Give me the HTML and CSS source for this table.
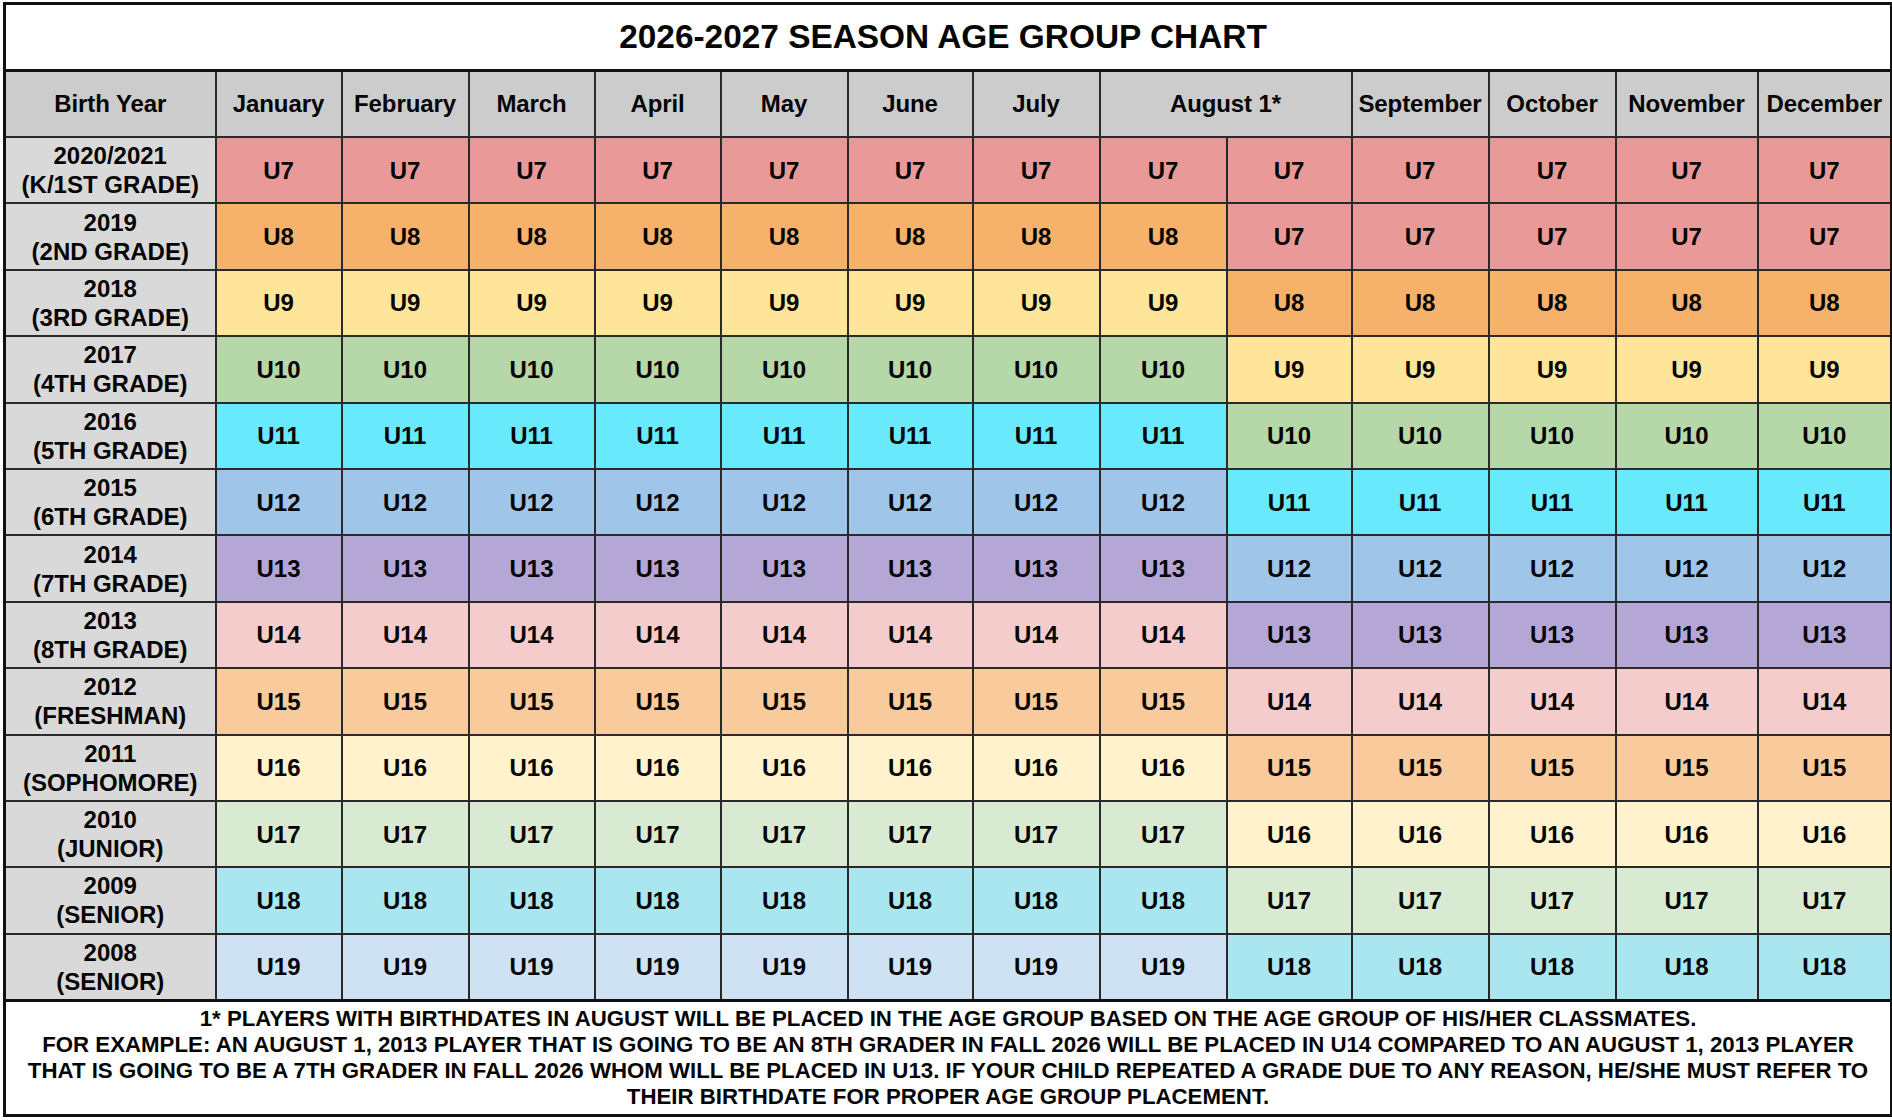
FILE: index.html
```html
<!DOCTYPE html>
<html lang="en">
<head>
<meta charset="utf-8">
<title>2026-2027 Season Age Group Chart</title>
<link rel="stylesheet" href="styles.css">
</head>
<body>
<table class="chart">
  <colgroup>
    <col class="c-year">
    <col class="c-m1"><col class="c-m2"><col class="c-m3"><col class="c-m4"><col class="c-m5"><col class="c-m6"><col class="c-m7">
    <col class="c-a1"><col class="c-a2">
    <col class="c-m9"><col class="c-m10"><col class="c-m11"><col class="c-m12">
  </colgroup>
  <tr class="title"><th colspan="14">2026-2027 SEASON AGE GROUP CHART</th></tr>
  <tr class="head">
    <th>Birth Year</th>
    <th>January</th>
    <th>February</th>
    <th>March</th>
    <th>April</th>
    <th>May</th>
    <th>June</th>
    <th>July</th>
    <th colspan="2">August 1*</th>
    <th>September</th>
    <th>October</th>
    <th>November</th>
    <th>December</th>
  </tr>
  <tr class="row">
    <td class="year">2020/2021<br>(K/1ST GRADE)</td>
    <td class="u7">U7</td><td class="u7">U7</td><td class="u7">U7</td><td class="u7">U7</td><td class="u7">U7</td><td class="u7">U7</td><td class="u7">U7</td><td class="u7">U7</td>
    <td class="u7">U7</td><td class="u7">U7</td><td class="u7">U7</td><td class="u7">U7</td><td class="u7">U7</td>
  </tr>
  <tr class="row">
    <td class="year">2019<br>(2ND GRADE)</td>
    <td class="u8">U8</td><td class="u8">U8</td><td class="u8">U8</td><td class="u8">U8</td><td class="u8">U8</td><td class="u8">U8</td><td class="u8">U8</td><td class="u8">U8</td>
    <td class="u7">U7</td><td class="u7">U7</td><td class="u7">U7</td><td class="u7">U7</td><td class="u7">U7</td>
  </tr>
  <tr class="row">
    <td class="year">2018<br>(3RD GRADE)</td>
    <td class="u9">U9</td><td class="u9">U9</td><td class="u9">U9</td><td class="u9">U9</td><td class="u9">U9</td><td class="u9">U9</td><td class="u9">U9</td><td class="u9">U9</td>
    <td class="u8">U8</td><td class="u8">U8</td><td class="u8">U8</td><td class="u8">U8</td><td class="u8">U8</td>
  </tr>
  <tr class="row">
    <td class="year">2017<br>(4TH GRADE)</td>
    <td class="u10">U10</td><td class="u10">U10</td><td class="u10">U10</td><td class="u10">U10</td><td class="u10">U10</td><td class="u10">U10</td><td class="u10">U10</td><td class="u10">U10</td>
    <td class="u9">U9</td><td class="u9">U9</td><td class="u9">U9</td><td class="u9">U9</td><td class="u9">U9</td>
  </tr>
  <tr class="row">
    <td class="year">2016<br>(5TH GRADE)</td>
    <td class="u11">U11</td><td class="u11">U11</td><td class="u11">U11</td><td class="u11">U11</td><td class="u11">U11</td><td class="u11">U11</td><td class="u11">U11</td><td class="u11">U11</td>
    <td class="u10">U10</td><td class="u10">U10</td><td class="u10">U10</td><td class="u10">U10</td><td class="u10">U10</td>
  </tr>
  <tr class="row">
    <td class="year">2015<br>(6TH GRADE)</td>
    <td class="u12">U12</td><td class="u12">U12</td><td class="u12">U12</td><td class="u12">U12</td><td class="u12">U12</td><td class="u12">U12</td><td class="u12">U12</td><td class="u12">U12</td>
    <td class="u11">U11</td><td class="u11">U11</td><td class="u11">U11</td><td class="u11">U11</td><td class="u11">U11</td>
  </tr>
  <tr class="row">
    <td class="year">2014<br>(7TH GRADE)</td>
    <td class="u13">U13</td><td class="u13">U13</td><td class="u13">U13</td><td class="u13">U13</td><td class="u13">U13</td><td class="u13">U13</td><td class="u13">U13</td><td class="u13">U13</td>
    <td class="u12">U12</td><td class="u12">U12</td><td class="u12">U12</td><td class="u12">U12</td><td class="u12">U12</td>
  </tr>
  <tr class="row">
    <td class="year">2013<br>(8TH GRADE)</td>
    <td class="u14">U14</td><td class="u14">U14</td><td class="u14">U14</td><td class="u14">U14</td><td class="u14">U14</td><td class="u14">U14</td><td class="u14">U14</td><td class="u14">U14</td>
    <td class="u13">U13</td><td class="u13">U13</td><td class="u13">U13</td><td class="u13">U13</td><td class="u13">U13</td>
  </tr>
  <tr class="row">
    <td class="year">2012<br>(FRESHMAN)</td>
    <td class="u15">U15</td><td class="u15">U15</td><td class="u15">U15</td><td class="u15">U15</td><td class="u15">U15</td><td class="u15">U15</td><td class="u15">U15</td><td class="u15">U15</td>
    <td class="u14">U14</td><td class="u14">U14</td><td class="u14">U14</td><td class="u14">U14</td><td class="u14">U14</td>
  </tr>
  <tr class="row">
    <td class="year">2011<br>(SOPHOMORE)</td>
    <td class="u16">U16</td><td class="u16">U16</td><td class="u16">U16</td><td class="u16">U16</td><td class="u16">U16</td><td class="u16">U16</td><td class="u16">U16</td><td class="u16">U16</td>
    <td class="u15">U15</td><td class="u15">U15</td><td class="u15">U15</td><td class="u15">U15</td><td class="u15">U15</td>
  </tr>
  <tr class="row">
    <td class="year">2010<br>(JUNIOR)</td>
    <td class="u17">U17</td><td class="u17">U17</td><td class="u17">U17</td><td class="u17">U17</td><td class="u17">U17</td><td class="u17">U17</td><td class="u17">U17</td><td class="u17">U17</td>
    <td class="u16">U16</td><td class="u16">U16</td><td class="u16">U16</td><td class="u16">U16</td><td class="u16">U16</td>
  </tr>
  <tr class="row">
    <td class="year">2009<br>(SENIOR)</td>
    <td class="u18">U18</td><td class="u18">U18</td><td class="u18">U18</td><td class="u18">U18</td><td class="u18">U18</td><td class="u18">U18</td><td class="u18">U18</td><td class="u18">U18</td>
    <td class="u17">U17</td><td class="u17">U17</td><td class="u17">U17</td><td class="u17">U17</td><td class="u17">U17</td>
  </tr>
  <tr class="row">
    <td class="year">2008<br>(SENIOR)</td>
    <td class="u19">U19</td><td class="u19">U19</td><td class="u19">U19</td><td class="u19">U19</td><td class="u19">U19</td><td class="u19">U19</td><td class="u19">U19</td><td class="u19">U19</td>
    <td class="u18">U18</td><td class="u18">U18</td><td class="u18">U18</td><td class="u18">U18</td><td class="u18">U18</td>
  </tr>
  <tr class="note">
    <td colspan="14">1* PLAYERS WITH BIRTHDATES IN AUGUST WILL BE PLACED IN THE AGE GROUP BASED ON THE AGE GROUP OF HIS/HER CLASSMATES.<br>FOR EXAMPLE: AN AUGUST 1, 2013 PLAYER THAT IS GOING TO BE AN 8TH GRADER IN FALL 2026 WILL BE PLACED IN U14 COMPARED TO AN AUGUST 1, 2013 PLAYER<br>THAT IS GOING TO BE A 7TH GRADER IN FALL 2026 WHOM WILL BE PLACED IN U13. IF YOUR CHILD REPEATED A GRADE DUE TO ANY REASON, HE/SHE MUST REFER TO<br>THEIR BIRTHDATE FOR PROPER AGE GROUP PLACEMENT.</td>
  </tr>
</table>
</body>
</html>
```

FILE: styles.css
```css
html, body {
  margin: 0;
  padding: 0;
  background: #ffffff;
}

body {
  font-family: "Liberation Sans", Arial, sans-serif;
  font-weight: bold;
  color: #050505;
}

.chart {
  margin: 2px 0 0 3px;
  width: 1887px;
  border-collapse: collapse;
  table-layout: fixed;
  border: 3px solid #111111;
}

.c-year { width: 211px; }
.c-m1 { width: 126px; }
.c-m2 { width: 127px; }
.c-m3 { width: 126px; }
.c-m4 { width: 126px; }
.c-m5 { width: 127px; }
.c-m6 { width: 125px; }
.c-m7 { width: 127px; }
.c-a1 { width: 127px; }
.c-a2 { width: 125px; }
.c-m9 { width: 137px; }
.c-m10 { width: 127px; }
.c-m11 { width: 142px; }
.c-m12 { width: 134px; }

.chart th,
.chart td {
  border: 2px solid #2a2a2a;
  padding: 0;
  text-align: center;
  vertical-align: middle;
  white-space: nowrap;
  overflow: hidden;
}

.title th {
  height: 64px;
  padding-right: 10px;
  background: #ffffff;
  font-size: 33.4px;
  border-bottom: 3px solid #111111;
}

.head th {
  height: 64px;
  background: #cccccc;
  font-size: 24px;
  letter-spacing: -0.1px;
}

.row td {
  height: 64.4px;
  font-size: 24px;
  line-height: 29px;
}

.row .year {
  background: #d9d9d9;
  font-size: 24px;
}

.note td {
  height: 112px;
  background: #ffffff;
  font-size: 22.25px;
  line-height: 26px;
  border-top: 3px solid #111111;
}

.u7 { background: #ea9999; }
.u8 { background: #f6b26b; }
.u9 { background: #ffe599; }
.u10 { background: #b6d7a8; }
.u11 { background: #68e9fc; }
.u12 { background: #9fc5e8; }
.u13 { background: #b4a7d6; }
.u14 { background: #f4cccc; }
.u15 { background: #f9cb9c; }
.u16 { background: #fff2cc; }
.u17 { background: #d9ead3; }
.u18 { background: #a9e6f0; }
.u19 { background: #cfe2f3; }
```
